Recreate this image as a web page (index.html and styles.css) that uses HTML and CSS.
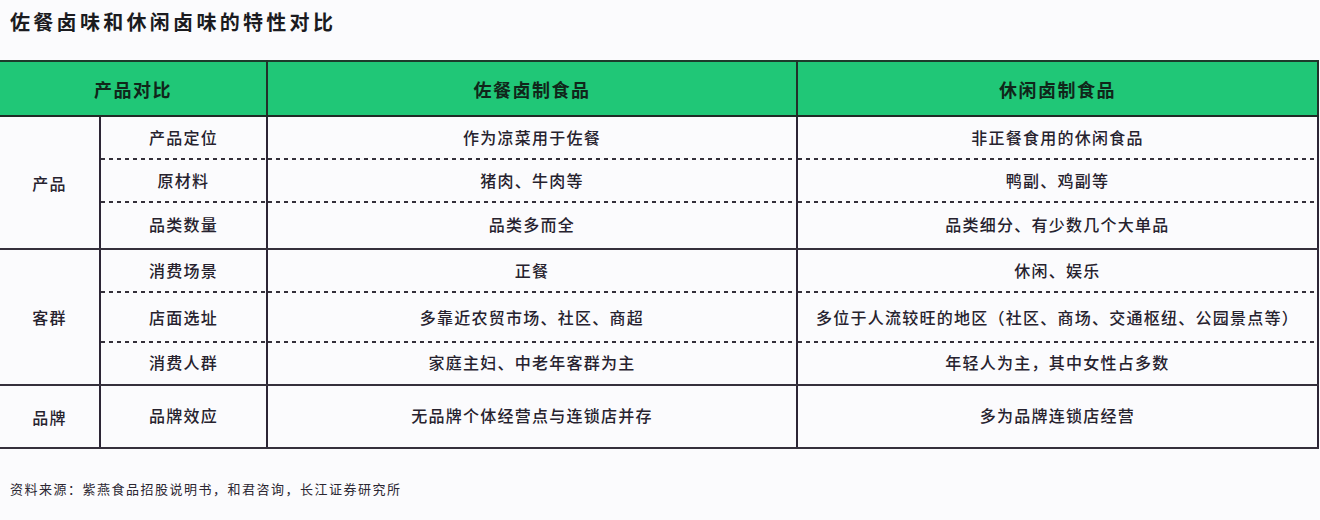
FILE: index.html
```html
<!DOCTYPE html>
<html lang="zh-CN">
<head>
<meta charset="utf-8">
<title>佐餐卤味和休闲卤味的特性对比</title>
<link rel="stylesheet" href="styles.css">
</head>
<body>
<div class="page">
  <h1 class="title">佐餐卤味和休闲卤味的特性对比</h1>
  <table class="cmp">
    <colgroup>
      <col class="c1"><col class="c2"><col class="c3"><col class="c4">
    </colgroup>
    <thead>
      <tr class="head">
        <th colspan="2">产品对比</th>
        <th>佐餐卤制食品</th>
        <th>休闲卤制食品</th>
      </tr>
    </thead>
    <tbody>
      <tr class="r1 dash">
        <td class="grp" rowspan="3">产品</td>
        <td>产品定位</td><td>作为凉菜用于佐餐</td><td>非正餐食用的休闲食品</td>
      </tr>
      <tr class="r2 dash">
        <td>原材料</td><td>猪肉、牛肉等</td><td>鸭副、鸡副等</td>
      </tr>
      <tr class="r3 solid">
        <td>品类数量</td><td>品类多而全</td><td>品类细分、有少数几个大单品</td>
      </tr>
      <tr class="r4 dash">
        <td class="grp" rowspan="3">客群</td>
        <td>消费场景</td><td>正餐</td><td>休闲、娱乐</td>
      </tr>
      <tr class="r5 dash">
        <td>店面选址</td><td>多靠近农贸市场、社区、商超</td><td>多位于人流较旺的地区（社区、商场、交通枢纽、公园景点等）</td>
      </tr>
      <tr class="r6 solid">
        <td>消费人群</td><td>家庭主妇、中老年客群为主</td><td>年轻人为主，其中女性占多数</td>
      </tr>
      <tr class="r7 solid">
        <td class="grp">品牌</td>
        <td>品牌效应</td><td>无品牌个体经营点与连锁店并存</td><td>多为品牌连锁店经营</td>
      </tr>
    </tbody>
  </table>
  <p class="source">资料来源：紫燕食品招股说明书，和君咨询，长江证券研究所</p>
</div>
</body>
</html>
```
FILE: styles.css
```css
html, body {
  margin: 0;
  padding: 0;
  background: #fbfbfd;
}
body {
  font-family: "Noto Sans CJK SC", "Noto Sans", sans-serif;
  color: #26222e;
}
.page {
  width: 1320px;
  height: 520px;
  overflow: hidden;
}
.title {
  margin: 8px 0 0 0;
  padding-left: 10px;
  font-size: 20px;
  line-height: 28px;
  font-weight: 700;
  letter-spacing: 3.3px;
  color: #1b1b1f;
}
.cmp {
  margin-top: 24px;
  width: 1318px;
  table-layout: fixed;
  border-collapse: collapse;
  font-size: 16px;
  letter-spacing: 1.25px;
  font-weight: 500;
}
.c1 { width: 100px; }
.c2 { width: 167px; }
.c3 { width: 530px; }
.c4 { width: 521px; }
.cmp th, .cmp td {
  padding: 0;
  text-align: center;
  vertical-align: middle;
  line-height: 20px;
}
.cmp td { padding-bottom: 3px; }
.cmp td.grp { padding-bottom: 0; }
.head th {
  background: #20c777;
  height: 53px;
  font-size: 18px;
  font-weight: 700;
  letter-spacing: 1.5px;
  color: #10261a;
  border-top: 2px solid #1d3b2b;
  border-bottom: 2px solid #1f2b26;
  border-left: 2px solid #22302a;
  border-right: 2px solid #22302a;
}
.head th:first-child { border-left: none; }
.cmp td {
  border-left: 2px solid #2c2535;
  border-right: 2px solid #2c2535;
}
.cmp td.grp { border-left: none; }
.dash td:not(.grp) {
  background-image: linear-gradient(to right, #34303a 55%, transparent 55%);
  background-size: 8px 2px;
  background-repeat: repeat-x;
  background-position: left bottom;
}
.solid td, .grp { border-bottom: 2px solid #35303c; }
.r1 td { height: 40px; }
.r2 td { height: 40px; }
.r3 td { height: 42px; }
.r4 td { height: 40px; }
.r5 td { height: 47px; }
.r6 td { height: 38px; }
.r7 td { height: 58px; }
.source {
  margin: 30px 0 0 0;
  padding-left: 10px;
  font-size: 13px;
  line-height: 20px;
  letter-spacing: 1.5px;
  color: #2b2732;
}
```
